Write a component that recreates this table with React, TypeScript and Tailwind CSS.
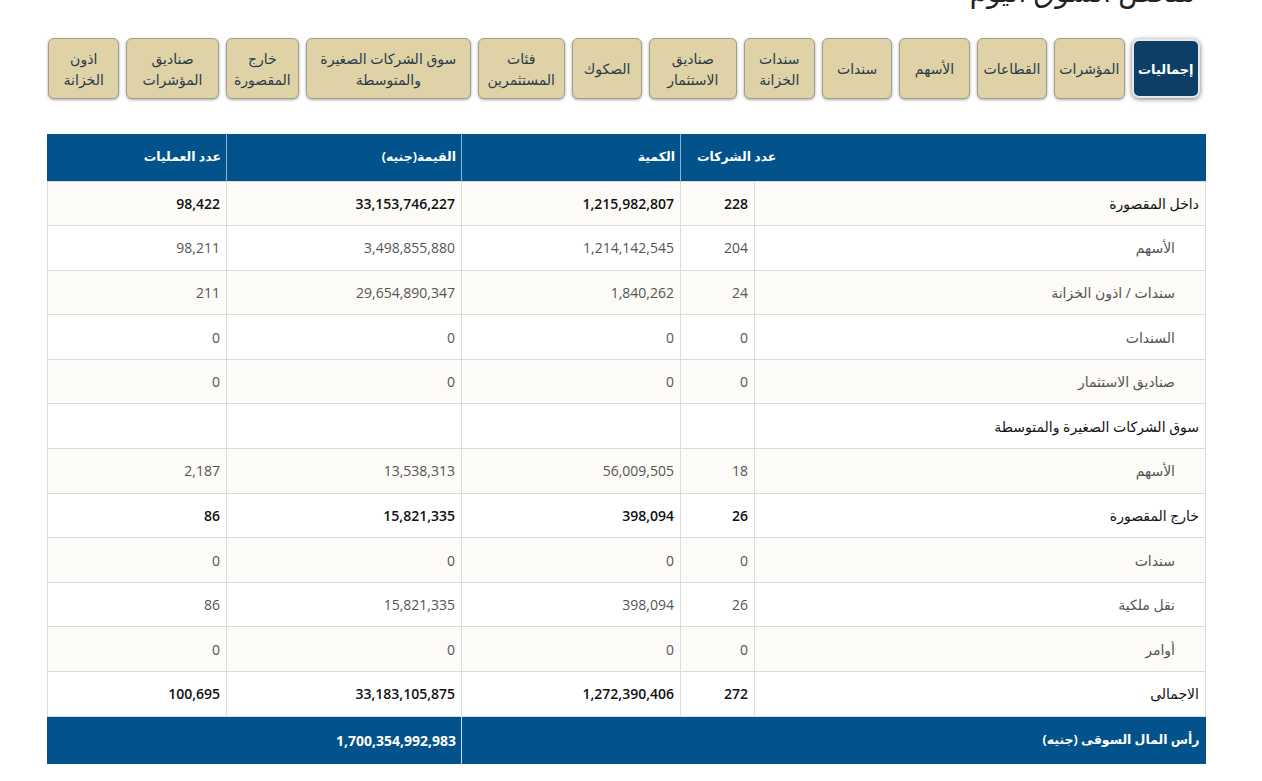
const tabs = [
  { l: ["إجماليات"], w: "w-[69px]" },
  { l: ["المؤشرات"], w: "w-[71px]" },
  { l: ["القطاعات"], w: "w-[71px]" },
  { l: ["الأسهم"], w: "w-[71px]" },
  { l: ["سندات"], w: "w-[71px]" },
  { l: ["سندات", "الخزانة"], w: "w-[72px]" },
  { l: ["صناديق", "الاستثمار"], w: "w-[88px]" },
  { l: ["الصكوك"], w: "w-[71px]" },
  { l: ["فئات", "المستثمرين"], w: "w-[88px]" },
  { l: ["سوق الشركات الصغيرة", "والمتوسطة"], w: "w-[166px]" },
  { l: ["خارج", "المقصورة"], w: "w-[74px]" },
  { l: ["صناديق", "المؤشرات"], w: "w-[93px]" },
  { l: ["اذون", "الخزانة"], w: "w-[72px]" },
];

type Row = { label: string; sub?: boolean; bold?: boolean; cells: string[] };

const rows: Row[] = [
  { label: "داخل المقصورة", bold: true, cells: ["228", "1,215,982,807", "33,153,746,227", "98,422"] },
  { label: "الأسهم", sub: true, cells: ["204", "1,214,142,545", "3,498,855,880", "98,211"] },
  { label: "سندات / اذون الخزانة", sub: true, cells: ["24", "1,840,262", "29,654,890,347", "211"] },
  { label: "السندات", sub: true, cells: ["0", "0", "0", "0"] },
  { label: "صناديق الاستثمار", sub: true, cells: ["0", "0", "0", "0"] },
  { label: "سوق الشركات الصغيرة والمتوسطة", cells: ["", "", "", ""] },
  { label: "الأسهم", sub: true, cells: ["18", "56,009,505", "13,538,313", "2,187"] },
  { label: "خارج المقصورة", bold: true, cells: ["26", "398,094", "15,821,335", "86"] },
  { label: "سندات", sub: true, cells: ["0", "0", "0", "0"] },
  { label: "نقل ملكية", sub: true, cells: ["26", "398,094", "15,821,335", "86"] },
  { label: "أوامر", sub: true, cells: ["0", "0", "0", "0"] },
  { label: "الاجمالى", bold: true, cells: ["272", "1,272,390,406", "33,183,105,875", "100,695"] },
];

export default function App() {
  return (
    <div dir="rtl" className="min-h-[781px] bg-white overflow-hidden font-['Open_Sans','DejaVu_Sans',sans-serif]">
      <div className="pr-[56px] pl-[48px]">
        <h1 className="-mt-[27px] h-[36px] pr-[11px] text-[28px] leading-[36px] text-[#222]">ملخص السوق اليوم</h1>

        <div className="mt-[29px] flex items-start gap-[7px] pr-[6px]">
          {tabs.map((t, i) => (
            <button
              key={i}
              className={
                t.w +
                (i === 0
                  ? " h-[59px] mt-[1px] rounded-[7px] border-2 border-[#e8e8e8] bg-[#0d3f66] text-white text-[13px] font-bold leading-[20px] shadow-[0_1px_5px_rgba(0,0,0,0.55)]"
                  : " h-[61px] rounded-[6px] border border-[#a39e8e] bg-[#dfd2a7] text-[#2b3a4a] text-[14px] leading-[21px] shadow-[0_1px_3px_rgba(0,0,0,0.35)]")
              }
            >
              {t.l.map((l, j) => (
                <div key={j} className="whitespace-nowrap">{l}</div>
              ))}
            </button>
          ))}
        </div>

        <table className="mt-[35px] w-[1158px] table-fixed border-collapse text-[14px]">
          <colgroup>
            <col className="w-[451px]" />
            <col className="w-[74px]" />
            <col className="w-[219px]" />
            <col className="w-[235px]" />
            <col className="w-[179px]" />
          </colgroup>
          <thead>
            <tr className="h-[47px] bg-[#02528b] text-white">
              <th colSpan={2} className="text-left pl-[16px] font-bold text-[12.5px]">عدد الشركات</th>
              <th className="text-right pr-[5px] font-bold text-[12.5px] border-r border-[#8fb2cf]">الكمية</th>
              <th className="text-right pr-[5px] font-bold text-[12.5px] border-r border-[#8fb2cf]">القيمة(جنيه)</th>
              <th className="text-right pr-[5px] font-bold text-[12.5px] border-r border-[#8fb2cf]">عدد العمليات</th>
            </tr>
          </thead>
          <tbody>
            {rows.map((r, i) => (
              <tr
                key={i}
                className={
                  "h-[44.6px] " +
                  (i % 2 === 0 ? "bg-[#fcfbf7] " : "bg-white ") +
                  (r.bold ? "text-[#111] font-semibold" : "text-[#555]")
                }
              >
                <td
                  className={
                    "border border-[#dcdcdc] font-normal text-[14px] " +
                    (r.sub ? "pr-[30px] text-[#555]" : "pr-[6px] text-[#111]")
                  }
                >
                  {r.label}
                </td>
                {r.cells.map((c, j) => (
                  <td key={j} className="border border-[#dcdcdc] text-right pr-[6px] pl-[5px]">
                    {c}
                  </td>
                ))}
              </tr>
            ))}
            <tr className="h-[48px] bg-[#02528b] text-white font-bold text-[14px]">
              <td colSpan={3} className="pr-[6px] text-[12.5px]">رأس المال السوقى (جنيه)</td>
              <td colSpan={2} className="text-right pr-[5px] border-r border-[#d0dce8]">1,700,354,992,983</td>
            </tr>
          </tbody>
        </table>
      </div>
    </div>
  );
}
